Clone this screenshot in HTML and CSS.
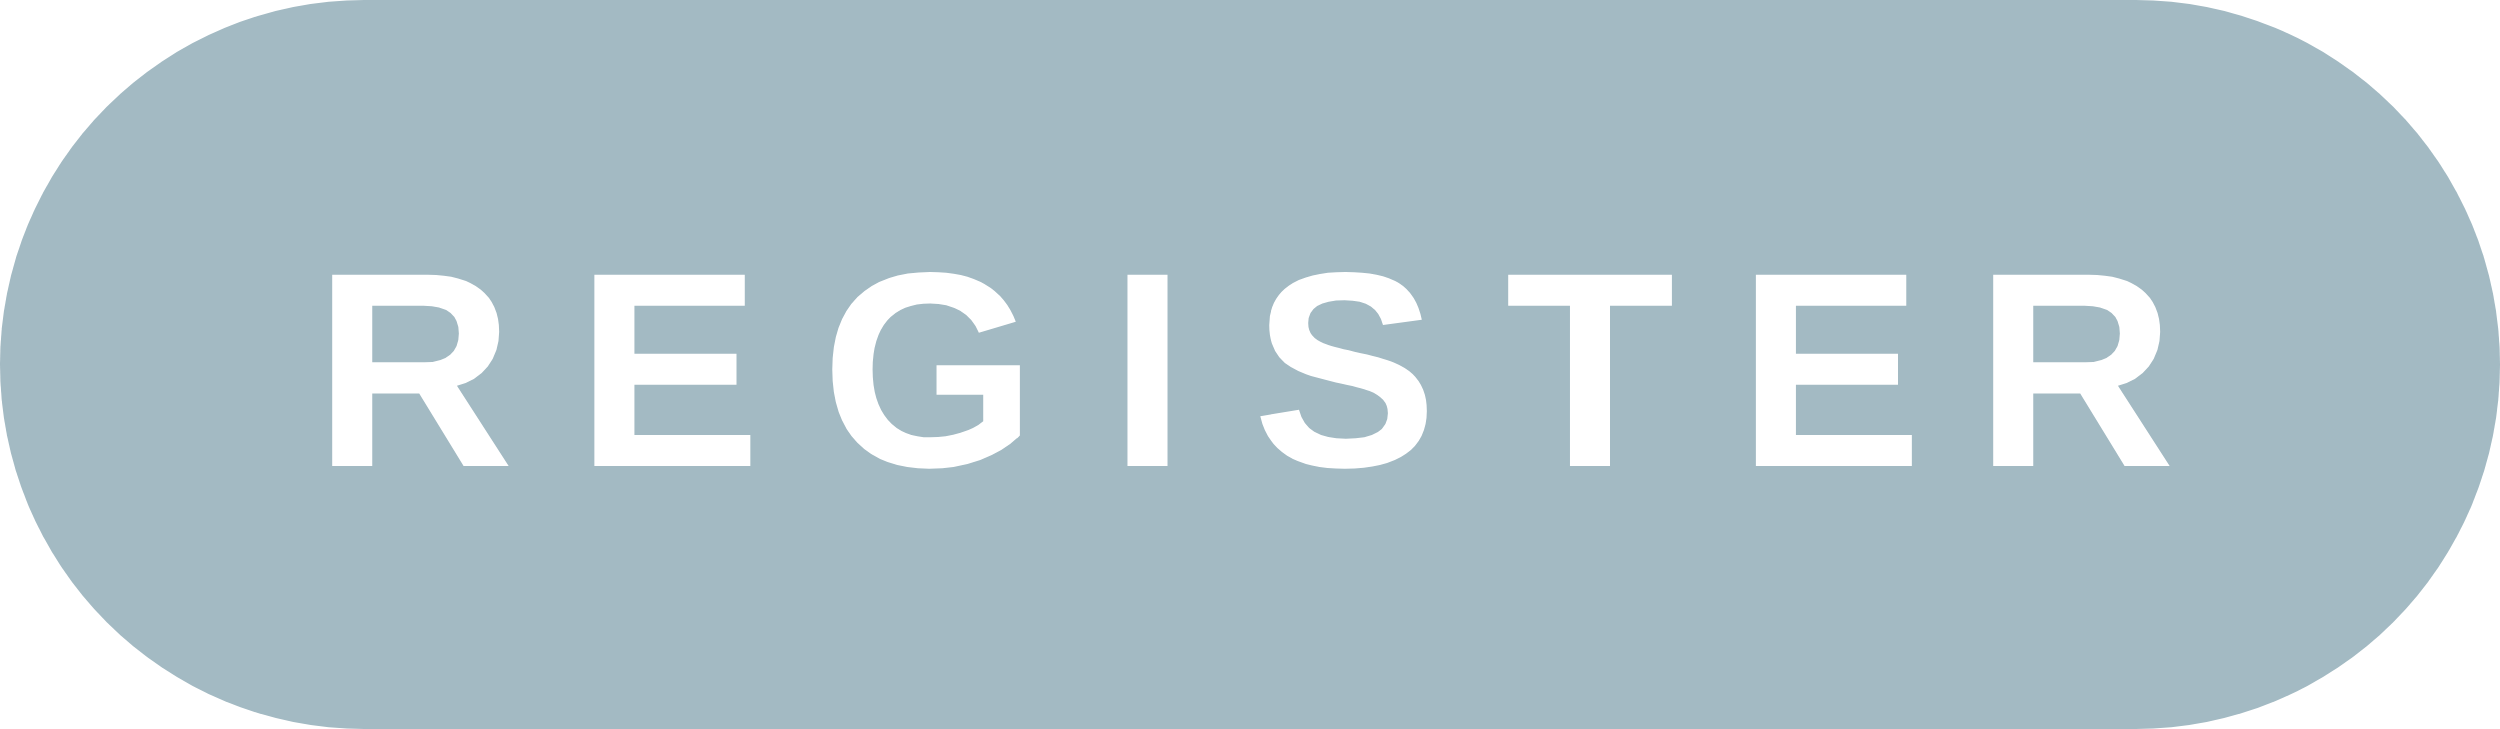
FILE: index.html
```html
<!DOCTYPE html>
<html lang="en">
<head>
<meta charset="utf-8">
<title>Register</title>
<link rel="stylesheet" href="styles.css">
</head>
<body>
<button class="register-btn" type="button" aria-label="REGISTER">
  <span class="register-label" aria-hidden="true"><span class="ch w-r1">R</span><span class="ch w-e1">E</span><span class="ch w-g">G</span><span class="ch w-i">I</span><span class="ch w-s">S</span><span class="ch w-t">T</span><span class="ch w-e2">E</span><span class="ch w-r2">R</span></span>
</button>
</body>
</html>
```

FILE: styles.css
```css
html, body {
  margin: 0;
  padding: 0;
  background: #ffffff;
}

.register-btn {
  display: flex;
  align-items: center;
  justify-content: flex-start;
  box-sizing: border-box;
  width: 2500px;
  height: 729px;
  margin: 0;
  padding: 10px 0 0 300px;
  border: none;
  border-radius: 364.5px;
  background: #a3bac3;
  color: #ffffff;
  cursor: pointer;
}

.register-label {
  display: flex;
  font-family: "Liberation Sans", Arial, sans-serif;
  font-weight: 700;
  font-size: 278px;
  line-height: 1;
}

.ch {
  display: block;
  text-align: center;
  box-sizing: border-box;
}

.w-r1 { width: 248px; padding-right: 20px; }
.w-e1 { width: 249px; padding-right: 8px; }
.w-g  { width: 264px; }
.w-i  { width: 173px; }
.w-s  { width: 222px; }
.w-t  { width: 268px; }
.w-e2 { width: 220px; padding-right: 8px; }
.w-r2 { width: 282px; padding-right: 20px; }
```
